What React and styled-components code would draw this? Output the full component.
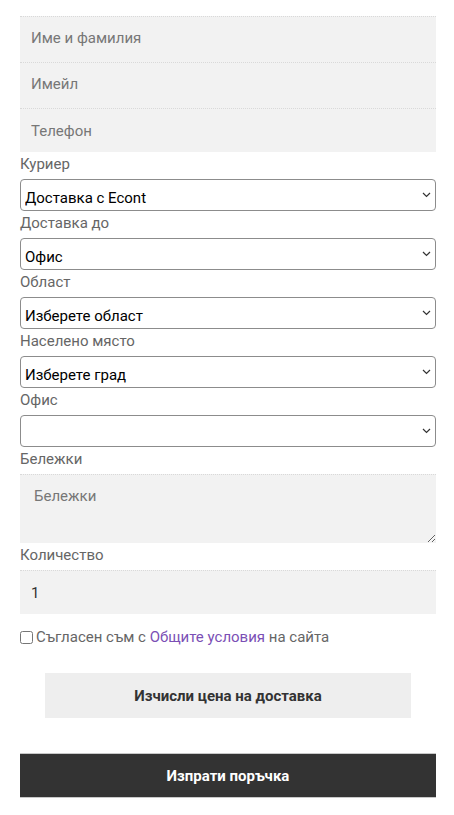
import React from "react";
import styled, { createGlobalStyle } from "styled-components";

const GlobalStyle = createGlobalStyle`
  html, body { margin: 0; padding: 0; background: #fff; }
  body { font-family: "Roboto", "Open Sans", sans-serif; }
  * { box-sizing: border-box; }
`;

const Form = styled.form`
  display: flex;
  flex-direction: column;
  width: 454px;
  padding: 16px 18px 0 20px;
`;

const TextInput = styled.input`
  display: block;
  width: 100%;
  height: ${(p) => p.$h || 46}px;
  margin: 0;
  padding: 0 11px ${(p) => (p.$h ? 0 : 3)}px;
  border: none;
  border-top: 1px dotted #d9d9d9;
  background: #f2f2f2;
  font-family: inherit;
  font-size: 15px;
  color: #333;
  outline: none;
  &::placeholder { color: #777; }
`;

const Label = styled.label`
  display: block;
  height: 27px;
  line-height: 25px;
  font-size: 15px;
  color: #666;
`;

const SelectWrap = styled.div`
  position: relative;
  width: 100%;
  height: 32px;
`;

const Select = styled.select`
  appearance: none;
  -webkit-appearance: none;
  width: 100%;
  height: 32px;
  margin: 0;
  padding: 6px 28px 0 4px;
  border: 1px solid #8c8c8c;
  border-radius: 4px;
  background: #fff;
  font-family: inherit;
  font-size: 15px;
  color: #000;
  outline: none;
`;

const Chevron = styled.svg`
  position: absolute;
  right: 5px;
  top: 13px;
  width: 9px;
  height: 6px;
  pointer-events: none;
`;

const TextArea = styled.textarea`
  display: block;
  width: 100%;
  height: 69px;
  margin: 0;
  padding: 12px 14px;
  border: none;
  border-top: 1px dotted #d9d9d9;
  background: #f2f2f2;
  font-family: inherit;
  font-size: 15px;
  color: #333;
  outline: none;
  resize: vertical;
  &::placeholder { color: #777; }
`;

const CheckRow = styled.div`
  display: flex;
  align-items: center;
  gap: 3px;
  margin-top: 12px;
  height: 22px;
  font-size: 15px;
  color: #666;
`;

const Check = styled.input`
  width: 13px;
  height: 13px;
  margin: 0;
`;

const Link = styled.a`
  color: #7b4fb5;
  text-decoration: none;
`;

const Button = styled.button`
  display: block;
  height: 45px;
  margin: ${(p) => p.$m};
  width: ${(p) => p.$w};
  border: none;
  border-top: 1px solid ${(p) => (p.$dark ? "#c8c8c8" : "transparent")};
  border-bottom: 1px solid ${(p) => (p.$dark ? "#c8c8c8" : "transparent")};
  background: ${(p) => (p.$dark ? "#333" : "#eee")};
  color: ${(p) => (p.$dark ? "#fff" : "#333")};
  font-family: inherit;
  font-weight: 700;
  font-size: 15px;
  cursor: pointer;
`;

const ChevronIcon = () => (
  <Chevron viewBox="0 0 9 6">
    <path d="M1 1l3.5 3.5L8 1" fill="none" stroke="#333" strokeWidth="1.2" />
  </Chevron>
);

const SelectField = ({ label, value }) => (
  <>
    <Label>{label}</Label>
    <SelectWrap>
      <Select defaultValue={value}>
        <option value={value}>{value}</option>
      </Select>
      <ChevronIcon />
    </SelectWrap>
  </>
);

export default function App() {
  return (
    <>
      <GlobalStyle />
      <Form onSubmit={(e) => e.preventDefault()}>
        <TextInput placeholder="Име и фамилия" />
        <TextInput placeholder="Имейл" />
        <TextInput placeholder="Телефон" $h={44} />
        <SelectField label="Куриер" value="Доставка с Econt" />
        <SelectField label="Доставка до" value="Офис" />
        <SelectField label="Област" value="Изберете област" />
        <SelectField label="Населено място" value="Изберете град" />
        <SelectField label="Офис" value="" />
        <Label>Бележки</Label>
        <TextArea placeholder="Бележки" />
        <Label>Количество</Label>
        <TextInput defaultValue="1" $h={44} />
        <CheckRow>
          <Check type="checkbox" />
          <span>
            Съгласен съм с <Link href="#">Общите условия</Link> на сайта
          </span>
        </CheckRow>
        <Button type="button" $m="25px 0 0 25px" $w="366px">
          Изчисли цена на доставка
        </Button>
        <Button type="submit" $dark $m="35px 0 0 0" $w="100%">
          Изпрати поръчка
        </Button>
      </Form>
    </>
  );
}
